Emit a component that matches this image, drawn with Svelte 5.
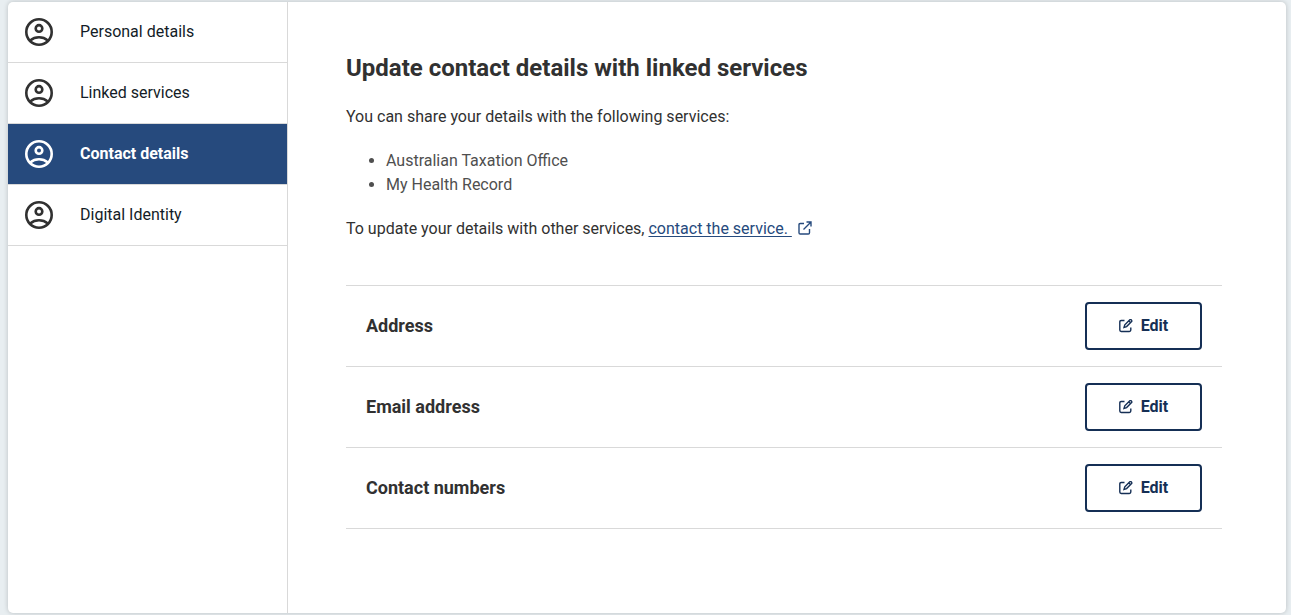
<script>
    let current = $state("Contact details");

    const pages = ["Personal details", "Linked services", "Contact details", "Digital Identity"];
    const services = ["Australian Taxation Office", "My Health Record"];
    const details = ["Address", "Email address", "Contact numbers"];

    function open_page(e, page) {
        e.preventDefault();
        current = page;
    }
</script>

<div class="page">
    <div class="card">
        <nav class="sidebar" aria-label="Account">
            {#each pages as page}
                <a
                    href="#top"
                    class="nav_item"
                    class:active={page == current}
                    aria-current={page == current ? "page" : undefined}
                    onclick={(e) => open_page(e, page)}
                >
                    <svg class="nav_icon" viewBox="0 0 28 28" aria-hidden="true">
                        <circle cx="14" cy="14" r="12.7" />
                        <circle cx="14" cy="10.4" r="3.3" />
                        <path d="M5.2 22.4C7.6 20.4 10.5 19.3 14 19.3s6.4 1.1 8.8 3.1" />
                    </svg>
                    <span>{page}</span>
                </a>
            {/each}
        </nav>

        <main class="content">
            <h2>Update contact details with linked services</h2>
            <p>You can share your details with the following services:</p>
            <ul class="services">
                {#each services as service}
                    <li>{service}</li>
                {/each}
            </ul>
            <p>
                To update your details with other services,
                <a class="link" href="#contact">contact the service.&nbsp;</a>
                <svg class="link_icon" viewBox="0 0 14 14" aria-hidden="true">
                    <path d="M6 2.5H2.2Q1 2.5 1 3.7v8.1Q1 13 2.2 13h8.1q1.2 0 1.2-1.2V8" />
                    <path d="M8.5 1H13v4.5M13 1L5.5 8.5" />
                </svg>
            </p>

            <div class="details">
                {#each details as detail}
                    <div class="detail">
                        <h3>{detail}</h3>
                        <button type="button" class="edit_btn" aria-label="Edit {detail}">
                            <svg class="edit_icon" viewBox="0 0 14 14" aria-hidden="true">
                                <path d="M5.5 1.5H2.2Q.8 1.5 .8 2.9v8.2q0 1.4 1.4 1.4h8.2q1.4 0 1.4-1.4V8.5" />
                                <path d="M5 8.5l.8-2.7 5-5q.7-.6 1.5.1l.2.2q.7.8.1 1.5l-5 5zM9.8 1.9l1.8 1.8" />
                            </svg>
                            Edit
                        </button>
                    </div>
                {/each}
            </div>
        </main>
    </div>
</div>

<style>
    :global(body) {
        background: #e8eef1;
    }

    .page {
        box-sizing: border-box;
        min-height: 100vh;
        padding: 2px 5px 2px 8px;
        display: flex;
        font-family: Roboto, "Liberation Sans", sans-serif;
        font-size: 16px;
        line-height: 24px;
        color: #313131;
    }

    .card {
        flex: 1;
        display: flex;
        background: #fff;
        border-radius: 5px;
        box-shadow: 0 0 5px rgba(0, 0, 0, 0.2);
        overflow: hidden;
    }

    .sidebar {
        width: 279px;
        flex-shrink: 0;
        border-right: 1px solid #d9d9d9;
    }

    .nav_item {
        display: flex;
        align-items: center;
        gap: 27px;
        height: 60px;
        padding: 0 17px;
        border-bottom: 1px solid #d9d9d9;
        color: #131c27;
        text-decoration: none;
    }

    .nav_item.active {
        background: #264a7d;
        color: #fff;
        font-weight: 700;
    }

    .nav_icon {
        width: 28px;
        height: 28px;
        fill: none;
        stroke: #313131;
        stroke-width: 2.6;
    }

    .active .nav_icon {
        stroke: #fff;
    }

    .content {
        flex: 1;
        padding: 50px 64px 50px 58px;
    }

    h2 {
        margin: 0 0 21px;
        font-size: 24px;
        line-height: 32px;
        font-weight: 700;
    }

    p {
        margin: 0 0 20px;
    }

    .services {
        margin: 0 0 20px;
        padding-left: 40px;
        color: #4f4f4f;
    }

    .link {
        color: #264a7d;
        text-decoration: underline;
        text-underline-offset: 2px;
    }

    .link_icon {
        width: 14px;
        height: 14px;
        margin-left: 2px;
        vertical-align: -1px;
        fill: none;
        stroke: #264a7d;
        stroke-width: 1.4;
    }

    .details {
        margin-top: 44px;
        border-top: 1px solid #d9d9d9;
    }

    .detail {
        display: flex;
        align-items: center;
        justify-content: space-between;
        padding: 16px 20px;
        border-bottom: 1px solid #d9d9d9;
    }

    h3 {
        margin: 0;
        font-size: 18px;
        line-height: 24px;
        font-weight: 700;
    }

    .edit_btn {
        display: flex;
        align-items: center;
        justify-content: center;
        gap: 8px;
        width: 117px;
        height: 48px;
        padding: 0;
        background: #fff;
        border: 2px solid #152f55;
        border-radius: 4px;
        color: #152f55;
        font-family: inherit;
        font-size: 16px;
        font-weight: 700;
        line-height: 24px;
        cursor: pointer;
    }

    .edit_icon {
        width: 14px;
        height: 14px;
        fill: none;
        stroke: #152f55;
        stroke-width: 1.4;
    }
</style>
